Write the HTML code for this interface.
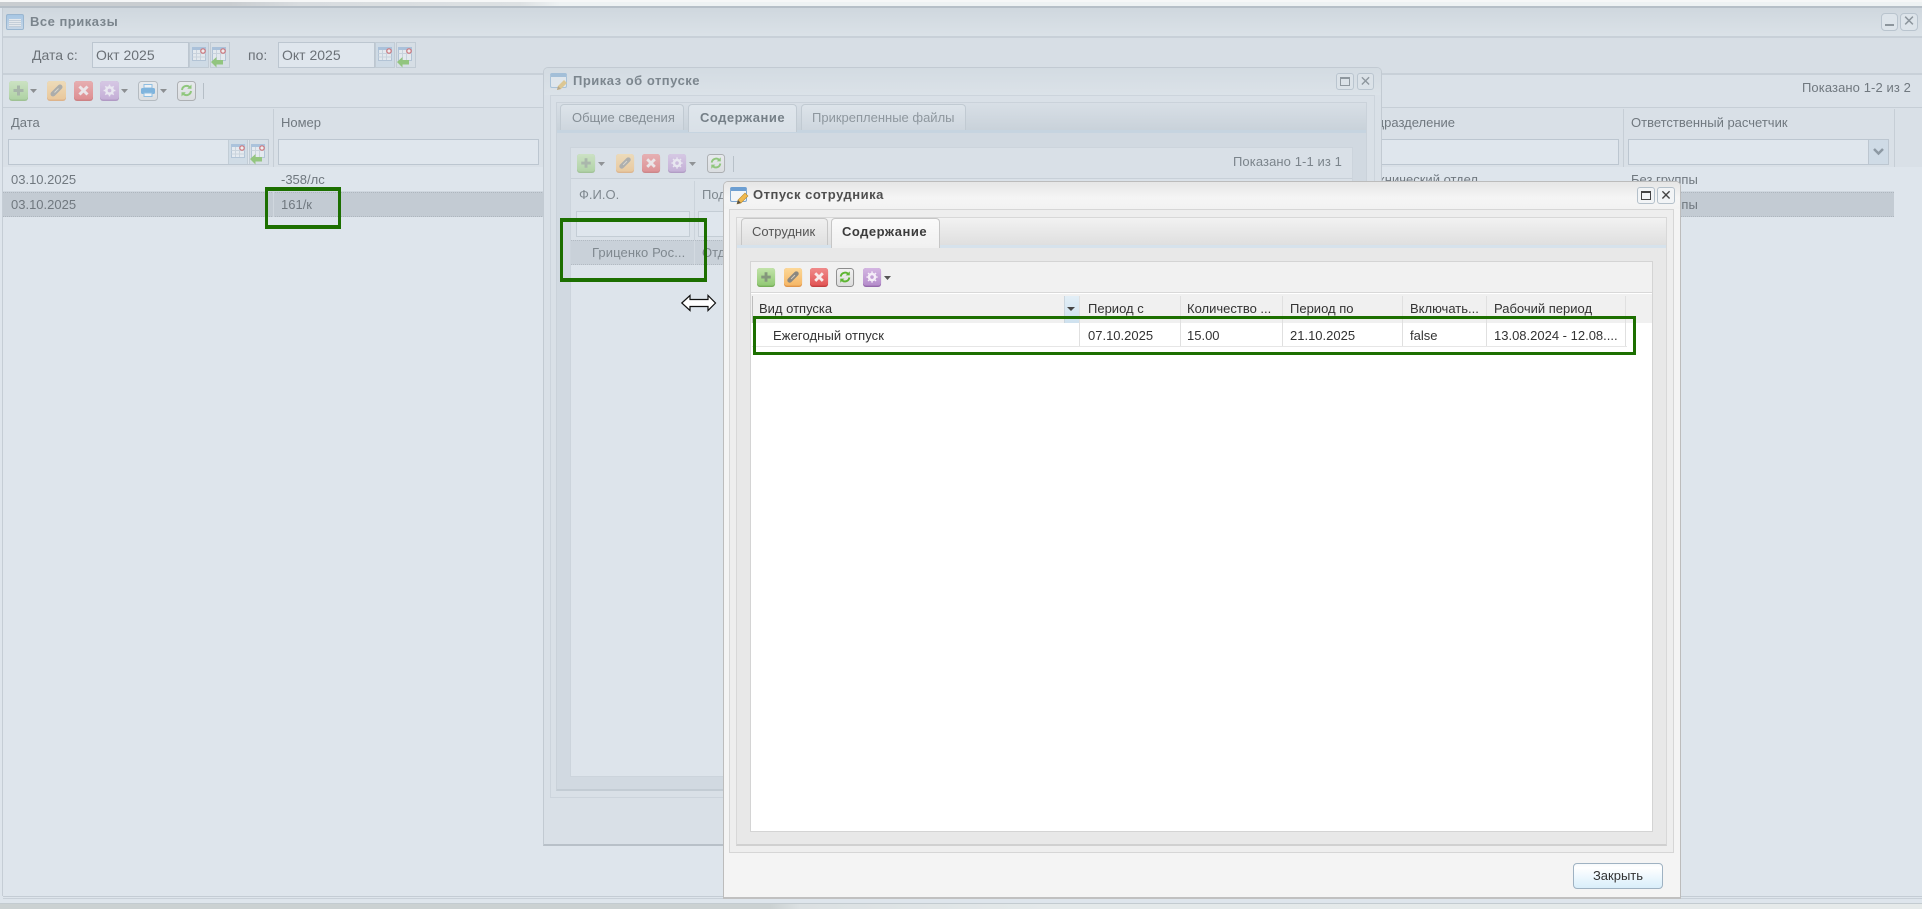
<!DOCTYPE html>
<html lang="ru"><head><meta charset="utf-8"><title>Все приказы</title>
<style>
html,body{margin:0;padding:0;width:1922px;height:909px;overflow:hidden;background:#dee5ec}
body{position:relative;font-family:"Liberation Sans","DejaVu Sans",sans-serif;font-size:13px}
.a{position:absolute;box-sizing:border-box}
.t{position:absolute;white-space:nowrap;line-height:16px;height:16px}
.m{color:#70787f}.s{color:#7f888f}.f{color:#333}
.b{font-weight:bold;letter-spacing:.5px}
svg{position:absolute;overflow:visible}
.d1{opacity:.58}.d2{opacity:.55}.d3{opacity:.8}
.g{position:absolute;box-sizing:border-box;border:3px solid #1c6f00;z-index:50}
</style></head><body>
<svg width="0" height="0" style="position:absolute"><defs>
<linearGradient id="gG" x1="0" y1="0" x2="0" y2="1"><stop offset="0" stop-color="#c2e3a9"/><stop offset="1" stop-color="#91c974"/></linearGradient>
<linearGradient id="gO" x1="0" y1="0" x2="0" y2="1"><stop offset="0" stop-color="#fcd898"/><stop offset="1" stop-color="#f6b766"/></linearGradient>
<linearGradient id="gR" x1="0" y1="0" x2="0" y2="1"><stop offset="0" stop-color="#f08a8a"/><stop offset="1" stop-color="#e25555"/></linearGradient>
<linearGradient id="gP" x1="0" y1="0" x2="0" y2="1"><stop offset="0" stop-color="#d4b6e2"/><stop offset="1" stop-color="#b58ccb"/></linearGradient>
<linearGradient id="gW" x1="0" y1="0" x2="0" y2="1"><stop offset="0" stop-color="#f2f2f2"/><stop offset="1" stop-color="#dcdcdc"/></linearGradient>
<symbol id="iPlus" viewBox="0 0 20 20"><rect width="19" height="20" rx="3" fill="#76ad58"/><rect width="19" height="18.5" rx="3" fill="url(#gG)"/><path d="M9.5 4.500v10M4.500 9.500h10" stroke="#84967c" stroke-width="3"/></symbol>
<symbol id="iEdit" viewBox="0 0 20 20"><rect width="19" height="20" rx="3" fill="#e0954a"/><rect width="19" height="18.5" rx="3" fill="url(#gO)"/><path d="M6 13L13 6" stroke="#8b8880" stroke-width="5" stroke-linecap="round"/><path d="M7.500 11.500l4-4" stroke="#d8d0c0" stroke-width="1"/></symbol>
<symbol id="iDel" viewBox="0 0 20 20"><rect width="19" height="20" rx="3" fill="#c23f3f"/><rect width="19" height="18.5" rx="3" fill="url(#gR)"/><path d="M5.5 5.500l8 8M13.5 5.500l-8 8" stroke="#f8eaea" stroke-width="3"/></symbol>
<symbol id="iCfg" viewBox="0 0 20 20"><rect width="19" height="20" rx="3" fill="#9468ab"/><rect width="19" height="18.5" rx="3" fill="url(#gP)"/><circle cx="9.5" cy="9.5" r="3.2" fill="none" stroke="#f5eef8" stroke-width="2.6"/><path d="M9.5 3.600v2M9.5 13.400v2M3.600 9.5h2M13.400 9.500h2M5.300 5.300l1.400 1.400M12.300 12.300l1.400 1.400M13.700 5.300l-1.400 1.400M6.700 12.300l-1.400 1.400" stroke="#f5eef8" stroke-width="1.5"/></symbol>
<symbol id="iRef" viewBox="0 0 20 20"><rect x=".5" y=".5" width="18" height="19" rx="3" fill="url(#gW)" stroke="#8d8d8d"/><path d="M5 9a4.600 4.600 0 0 1 8-2.600" fill="none" stroke="#5cb531" stroke-width="2"/><path d="M14.500 3.500v4.300h-4.300z" fill="#5cb531"/><path d="M14 10a4.600 4.600 0 0 1-8 2.600" fill="none" stroke="#5cb531" stroke-width="2"/><path d="M4.500 15.500v-4.300h4.300z" fill="#5cb531"/></symbol>
<symbol id="iPrn" viewBox="0 0 20 20"><rect x=".5" y=".5" width="19" height="19" rx="3" fill="url(#gW)" stroke="#9aa0a6"/><rect x="6" y="3.500" width="8" height="3.500" fill="#fff" stroke="#5aa6dc" stroke-width="1"/><rect x="3" y="7" width="14" height="6" rx="1.500" fill="#3f95d6"/><rect x="6" y="12" width="8" height="3.500" fill="#fff" stroke="#5aa6dc" stroke-width="1"/></symbol>
<symbol id="iCar" viewBox="0 0 8 5"><path d="M0 0h7L3.500 4z" fill="#555"/></symbol>
<symbol id="iCal" viewBox="0 0 20 26"><rect x=".5" y=".5" width="19" height="25" fill="#cddae5" stroke="#bcc7d1"/><rect x="3.500" y="5.500" width="13" height="13" fill="#e6ecf1" stroke="#a9bdd2"/><rect x="3" y="5" width="14" height="3" fill="#9fbbd8"/><path d="M3.500 11.500h13M3.500 15h13M7.500 8v10M11.500 8v10" stroke="#c5d0da" stroke-width="1"/><circle cx="14" cy="9" r="2.200" fill="#f2f2f2" stroke="#cc5a60" stroke-width="1.200"/></symbol>
<symbol id="iCal2" viewBox="0 0 20 26"><rect x=".5" y=".5" width="19" height="25" fill="#d6dee5" stroke="#bcc7d1"/><rect x="2.500" y="5.500" width="13" height="13" fill="#e6ecf1" stroke="#a9bdd2"/><rect x="2" y="5" width="14" height="3" fill="#9fbbd8"/><path d="M2.500 11.500h13M6.500 8v10M10.500 8v10" stroke="#c5d0da" stroke-width="1"/><circle cx="13" cy="9" r="2.200" fill="#f2f2f2" stroke="#cc5a60" stroke-width="1.200"/><path d="M1 20l5.500-5v3h6.500v4.500H6.500v3z" fill="#82bf66"/></symbol>
</defs></svg>

<!-- top strip -->
<div class="a" style="left:0;top:0;width:1922px;height:2px;background:#f6f7f7"></div>
<div class="a" style="left:0;top:2px;width:1922px;height:5px;background:linear-gradient(90deg,#c9cdd0 0,#c9cdd0 230px,#d8dcdf 300px,#dde1e3 520px,#eef2f3 560px,#eef2f3 100%)"></div>
<div class="a" style="left:0;top:6px;width:1922px;height:2px;background:#b6bfc7"></div>

<!-- MAIN WINDOW -->
<div class="a" style="left:2px;top:8px;width:1920px;height:888px;background:#dee5ec;border-left:1px solid #c5cdd5"></div>
<div class="a" style="left:3px;top:8px;width:1919px;height:29px;background:linear-gradient(#cfd7de,#dbe2e8)"></div>
<div class="a" style="left:6px;top:14px;width:18px;height:16px;background:linear-gradient(#a7c6e4,#c6d6e6);border:1px solid #9ab6d0;border-radius:2px"></div>
<div class="a" style="left:9px;top:19px;width:12px;height:8px;background:repeating-linear-gradient(#e4e8ec 0,#e4e8ec 1px,#c4ced8 1px,#c4ced8 2px)"></div>
<div class="t b" style="left:30px;top:14px;color:#7b858d">Все приказы</div>
<div class="a" style="left:1881px;top:13px;width:17px;height:18px;border:1px solid #b9c4ce;border-radius:4px;background:#dde4ea"></div>
<div class="a" style="left:1885px;top:24px;width:9px;height:2px;background:#8c959c"></div>
<div class="a" style="left:1900px;top:13px;width:18px;height:18px;border:1px solid #b9c4ce;border-radius:4px;background:#dde4ea;color:#8c959c;font-size:15px;line-height:16px;text-align:center">✕</div>

<div class="a" style="left:3px;top:36px;width:1919px;height:2px;background:#c8d0d8"></div>
<div class="a" style="left:3px;top:38px;width:1919px;height:36px;background:#d7dee5"></div>
<div class="t" style="left:32px;top:47px;font-size:14px;color:#6b7177">Дата с:</div>
<div class="a" style="left:92px;top:42px;width:97px;height:26px;border:1px solid #bcc6d0;background:#dfe6ed"></div>
<div class="t" style="left:96px;top:47px;font-size:14px;color:#6b7177">Окт 2025</div>
<svg class="d3" style="left:189px;top:42px" width="20" height="26"><use href="#iCal"/></svg>
<svg class="d3" style="left:210px;top:42px" width="20" height="26"><use href="#iCal2"/></svg>
<div class="t" style="left:248px;top:47px;font-size:14px;color:#6b7177">по:</div>
<div class="a" style="left:278px;top:42px;width:97px;height:26px;border:1px solid #bcc6d0;background:#dfe6ed"></div>
<div class="t" style="left:282px;top:47px;font-size:14px;color:#6b7177">Окт 2025</div>
<svg class="d3" style="left:375px;top:42px" width="20" height="26"><use href="#iCal"/></svg>
<svg class="d3" style="left:396px;top:42px" width="20" height="26"><use href="#iCal2"/></svg>

<div class="a" style="left:3px;top:73px;width:1919px;height:2px;background:#c8d0d8"></div>
<div class="a" style="left:3px;top:75px;width:1919px;height:32px;background:#dae1e8"></div>
<svg class="d1" style="left:9px;top:81px" width="20" height="20"><use href="#iPlus"/></svg>
<svg class="d1" style="left:30px;top:89px" width="8" height="5"><use href="#iCar"/></svg>
<svg class="d1" style="left:47px;top:81px" width="20" height="20"><use href="#iEdit"/></svg>
<svg class="d1" style="left:74px;top:81px" width="20" height="20"><use href="#iDel"/></svg>
<svg class="d1" style="left:100px;top:81px" width="20" height="20"><use href="#iCfg"/></svg>
<svg class="d1" style="left:121px;top:89px" width="8" height="5"><use href="#iCar"/></svg>
<svg class="d1" style="left:138px;top:81px" width="20" height="20"><use href="#iPrn"/></svg>
<svg class="d1" style="left:160px;top:89px" width="8" height="5"><use href="#iCar"/></svg>
<svg class="d1" style="left:177px;top:81px" width="20" height="20"><use href="#iRef"/></svg>
<div class="a" style="left:203px;top:83px;width:1px;height:16px;background:#b5bec6"></div>
<div class="t" style="right:11px;top:80px;color:#70787f;letter-spacing:.1px">Показано 1-2 из 2</div>

<div class="a" style="left:3px;top:107px;width:1919px;height:1px;background:#c6ced6"></div>
<div class="a" style="left:3px;top:108px;width:1919px;height:59px;background:#d9e0e7"></div>
<div class="a" style="left:273px;top:109px;width:1px;height:58px;background:#c6ced6"></div>
<div class="a" style="left:1623px;top:109px;width:1px;height:58px;background:#c6ced6"></div>
<div class="a" style="left:1894px;top:109px;width:1px;height:58px;background:#c6ced6"></div>
<div class="t m" style="left:11px;top:115px">Дата</div>
<div class="t m" style="left:281px;top:115px">Номер</div>
<div class="t m" style="right:467px;top:115px">Подразделение</div>
<div class="t m" style="left:1631px;top:115px">Ответственный расчетчик</div>
<div class="a" style="left:8px;top:139px;width:261px;height:26px;border:1px solid #bcc6d0;background:#dfe6ed"></div>
<svg class="d3" style="left:228px;top:139px" width="20" height="26"><use href="#iCal"/></svg>
<svg class="d3" style="left:249px;top:139px" width="20" height="26"><use href="#iCal2"/></svg>
<div class="a" style="left:278px;top:139px;width:261px;height:26px;border:1px solid #bcc6d0;background:#dfe6ed"></div>
<div class="a" style="left:1300px;top:139px;width:319px;height:26px;border:1px solid #bcc6d0;background:#dfe6ed"></div>
<div class="a" style="left:1628px;top:139px;width:261px;height:26px;border:1px solid #bcc6d0;background:#dfe6ed"></div>
<div class="a" style="left:1868px;top:139px;width:21px;height:26px;border:1px solid #bcc6d0;background:#cfdbe6"></div>
<svg style="left:1873px;top:148px" width="11" height="8"><path d="M1 1l4.500 4.500L10 1" fill="none" stroke="#8d99a3" stroke-width="2.500"/></svg>

<div class="t m" style="left:11px;top:172px">03.10.2025</div>
<div class="t m" style="left:281px;top:172px">-358/лс</div>
<div class="t m" style="right:444px;top:172px">Технический отдел</div>
<div class="t m" style="left:1631px;top:172px">Без группы</div>
<div class="a" style="left:3px;top:191px;width:1891px;height:1px;background:#cfd7df"></div>
<div class="a" style="left:3px;top:192px;width:1891px;height:25px;background:#c3cbd3;border-top:1px dotted #aeb6be;border-bottom:1px dotted #aeb6be"></div>
<div class="a" style="left:273px;top:192px;width:1px;height:25px;background:#d0d7de"></div>
<div class="t m" style="left:11px;top:197px">03.10.2025</div>
<div class="t m" style="left:281px;top:197px">161/к</div>
<div class="t m" style="left:1631px;top:197px">Без группы</div>

<div class="g" style="left:265px;top:187px;width:76px;height:42px;border-width:4px 3.500px"></div>

<div class="a" style="left:3px;top:896px;width:1919px;height:1px;background:#c4ccd4"></div>
<div class="a" style="left:3px;top:898px;width:1919px;height:1px;background:#c8d0d8"></div>
<div class="a" style="left:0;top:904px;width:1922px;height:5px;background:linear-gradient(90deg,#cbd1d2 0,#cbd1d2 770px,#dbe0e2 800px,#e4e9ea 1050px,#e6eaea 100%)"></div>
<div class="a" style="left:0;top:903px;width:1922px;height:1px;background:#c3cbd0"></div>

<!-- WINDOW 2 -->
<div class="a" style="left:543px;top:67px;width:839px;height:779px;background:#d9e0e7;border:1px solid #c2cad2;border-bottom:2px solid #b8c0c8;border-radius:5px 5px 0 0"></div>
<div class="a" style="left:544px;top:68px;width:837px;height:27px;background:linear-gradient(#d3dbe2,#dbe2e8);border-radius:4px 4px 0 0"></div>
<div class="a" style="left:550px;top:73px;width:17px;height:15px;background:#dfe6ec;border:1px solid #a9c2d8;border-top:4px solid #a3bfd8;border-radius:2px"></div>
<svg style="left:555px;top:78px" width="14" height="14"><path d="M2 12l1-4L9 2l3 3-6 6z" fill="#dcc794"/><path d="M2 12l1-4 3 3z" fill="#b9a98a"/></svg>
<div class="t b" style="left:573px;top:73px;color:#7c868e">Приказ об отпуске</div>
<div class="a" style="left:1336px;top:73px;width:18px;height:17px;border:1px solid #bac5cf;border-radius:3px;background:#dbe2e8"></div>
<div class="a" style="left:1340px;top:77px;width:10px;height:9px;border:1px solid #8e979e;border-top-width:2px"></div>
<div class="a" style="left:1357px;top:73px;width:17px;height:17px;border:1px solid #bac5cf;border-radius:3px;background:#dbe2e8;color:#8e979e;font-size:14px;line-height:15px;text-align:center">✕</div>
<div class="a" style="left:550px;top:95px;width:825px;height:703px;border:1px solid #ccd4dc;background:#d9e0e7"></div>
<div class="a" style="left:556px;top:102px;width:811px;height:689px;border:1px solid #cad2da;border-bottom:2px solid #c3ccd4;background:#d1d9e1"></div>
<div class="a" style="left:557px;top:103px;width:809px;height:27px;background:linear-gradient(#d8dfe6,#c9d2da)"></div>
<div class="a" style="left:557px;top:130px;width:809px;height:3px;background:#c6d4e0"></div>
<div class="a" style="left:560px;top:104px;width:124px;height:26px;border:1px solid #c1cad2;border-bottom:0;border-radius:4px 4px 0 0;background:linear-gradient(#dde4ea,#ced6de)"></div>
<div class="t" style="left:572px;top:110px;color:#858e95">Общие сведения</div>
<div class="a" style="left:688px;top:104px;width:109px;height:28px;border:1px solid #c1cad2;border-bottom:0;border-radius:4px 4px 0 0;background:linear-gradient(#dfe6ec,#d9e0e7)"></div>
<div class="t b" style="left:700px;top:110px;color:#757f87">Содержание</div>
<div class="a" style="left:801px;top:104px;width:165px;height:26px;border:1px solid #c1cad2;border-bottom:0;border-radius:4px 4px 0 0;background:linear-gradient(#dde4ea,#ced6de)"></div>
<div class="t" style="left:812px;top:110px;color:#8e979e">Прикрепленные файлы</div>
<div class="a" style="left:570px;top:147px;width:783px;height:630px;border:1px solid #ccd4dc;background:#dde4eb"></div>
<div class="a" style="left:571px;top:148px;width:781px;height:31px;background:#d9e0e7;border-bottom:1px solid #c8d0d8"></div>
<svg class="d2" style="left:577px;top:154px" width="19" height="19"><use href="#iPlus"/></svg>
<svg class="d2" style="left:598px;top:162px" width="8" height="5"><use href="#iCar"/></svg>
<svg class="d2" style="left:616px;top:154px" width="19" height="19"><use href="#iEdit"/></svg>
<svg class="d2" style="left:642px;top:154px" width="19" height="19"><use href="#iDel"/></svg>
<svg class="d2" style="left:668px;top:154px" width="19" height="19"><use href="#iCfg"/></svg>
<svg class="d2" style="left:689px;top:162px" width="8" height="5"><use href="#iCar"/></svg>
<svg class="d1" style="left:707px;top:154px" width="19" height="19"><use href="#iRef"/></svg>
<div class="a" style="left:733px;top:156px;width:1px;height:16px;background:#b8c1c9"></div>
<div class="t" style="right:580px;top:154px;color:#7b848b;letter-spacing:.1px">Показано 1-1 из 1</div>
<div class="a" style="left:571px;top:179px;width:781px;height:61px;background:#dae1e8"></div>
<div class="a" style="left:694px;top:181px;width:1px;height:84px;background:#cbd3db"></div>
<div class="t s" style="left:579px;top:187px">Ф.И.О.</div>
<div class="t s" style="left:702px;top:187px">Подразделение</div>
<div class="a" style="left:576px;top:211px;width:114px;height:26px;border:1px solid #c4cdd5;background:#dfe6ed"></div>
<div class="a" style="left:698px;top:211px;width:100px;height:26px;border:1px solid #c4cdd5;background:#dfe6ed"></div>
<div class="a" style="left:571px;top:240px;width:781px;height:25px;background:#c9d1d9;border-top:1px dotted #b2bac2;border-bottom:1px dotted #b2bac2"></div>
<div class="a" style="left:694px;top:240px;width:1px;height:25px;background:#d3dae1"></div>
<div class="t s" style="left:592px;top:245px;letter-spacing:.1px">Гриценко Рос...</div>
<div class="t s" style="left:702px;top:245px">Отдел</div>

<div class="g" style="left:560px;top:218px;width:147px;height:64px;border-width:4px 3px"></div>

<!-- cursor -->
<svg style="left:681px;top:294px;z-index:60" width="36" height="18"><path d="M.800 9L9 1.500V5.500H27V1.500L34.500 9L27 16.500V12.500H9V16.500Z" fill="#fff" stroke="#111" stroke-width="1.200"/></svg>

<!-- WINDOW 3 -->
<div class="a" style="left:723px;top:181px;width:958px;height:718px;background:#f4f4f4;border:1px solid #bcbcbc;border-bottom:2px solid #c0c0c0;border-radius:5px 5px 0 0;z-index:10"></div>
<div style="position:absolute;left:0;top:0;z-index:11">
<div class="a" style="left:724px;top:182px;width:956px;height:27px;background:linear-gradient(#e6e6e6,#f5f5f5 60%,#f2f2f2);border-radius:4px 4px 0 0"></div>
<div class="a" style="left:730px;top:187px;width:17px;height:15px;background:#f2f5f8;border:1px solid #7fa7d0;border-top:4px solid #6d9fd2;border-radius:2px"></div>
<svg style="left:735px;top:191px" width="14" height="15"><path d="M2 13l1-4L10 2l3 3-7 7z" fill="#f0b94e" stroke="#b88a2e" stroke-width=".6"/><path d="M2 13l1-4 3 3z" fill="#55504a"/></svg>
<div class="t b" style="left:753px;top:187px;color:#4f4f4f">Отпуск сотрудника</div>
<div class="a" style="left:1637px;top:187px;width:18px;height:17px;border:1px solid #b4c0ca;border-radius:3px;background:#f2f4f6"></div>
<div class="a" style="left:1641px;top:191px;width:10px;height:9px;border:1px solid #444;border-top-width:2px"></div>
<div class="a" style="left:1657px;top:187px;width:18px;height:17px;border:1px solid #b4c0ca;border-radius:3px;background:#f2f4f6;color:#444;font-size:14px;line-height:15px;text-align:center">✕</div>
<div class="a" style="left:729px;top:209px;width:945px;height:644px;border:1px solid #d6d6d6;background:#eeeeee"></div>
<div class="a" style="left:736px;top:217px;width:931px;height:629px;border:1px solid #d8d8d8;border-bottom:2px solid #d0d0d0;background:#e8e8e8"></div>
<div class="a" style="left:737px;top:218px;width:929px;height:27px;background:linear-gradient(#f2f2f2,#dfdfdf)"></div>
<div class="a" style="left:737px;top:245px;width:929px;height:3px;background:#d6e2ec"></div>
<div class="a" style="left:741px;top:218px;width:87px;height:27px;border:1px solid #c6c6c6;border-bottom:0;border-radius:4px 4px 0 0;background:linear-gradient(#f0f0f0,#e0e0e0)"></div>
<div class="t" style="left:752px;top:224px;color:#555">Сотрудник</div>
<div class="a" style="left:831px;top:218px;width:109px;height:30px;border:1px solid #c6c6c6;border-bottom:0;border-radius:4px 4px 0 0;background:linear-gradient(#fafafa,#f0f0f0)"></div>
<div class="t b" style="left:842px;top:224px;color:#3c3c3c">Содержание</div>
<div class="a" style="left:750px;top:261px;width:903px;height:571px;border:1px solid #d4d4d4;background:#fff"></div>
<div class="a" style="left:751px;top:262px;width:901px;height:31px;background:#f1f1f1;border-bottom:1px solid #d8d8d8"></div>
<svg style="left:757px;top:268px" width="19" height="19"><use href="#iPlus"/></svg>
<svg style="left:784px;top:268px" width="19" height="19"><use href="#iEdit"/></svg>
<svg style="left:810px;top:268px" width="19" height="19"><use href="#iDel"/></svg>
<svg style="left:836px;top:268px" width="19" height="19"><use href="#iRef"/></svg>
<svg style="left:863px;top:268px" width="19" height="19"><use href="#iCfg"/></svg>
<svg style="left:884px;top:276px" width="8" height="5"><use href="#iCar"/></svg>
<div class="a" style="left:751px;top:294px;width:901px;height:29px;background:#f0f0f0"></div>
<div class="a" style="left:752px;top:296px;width:1px;height:27px;background:#bdbdbd"></div>
<div class="a" style="left:1064px;top:296px;width:15px;height:27px;background:linear-gradient(#e2eef6,#cfe2ef);border-left:1px solid #cbd6de"></div>
<svg style="left:1067px;top:307px" width="9" height="5"><path d="M0 0h8L4 4z" fill="#444"/></svg>
<div class="a" style="left:1079px;top:296px;width:1px;height:51px;background:#e0e0e0"></div>
<div class="a" style="left:1180px;top:296px;width:1px;height:51px;background:#e0e0e0"></div>
<div class="a" style="left:1282px;top:296px;width:1px;height:51px;background:#e0e0e0"></div>
<div class="a" style="left:1402px;top:296px;width:1px;height:51px;background:#e0e0e0"></div>
<div class="a" style="left:1486px;top:296px;width:1px;height:51px;background:#e0e0e0"></div>
<div class="a" style="left:1625px;top:296px;width:1px;height:51px;background:#e0e0e0"></div>
<div class="a" style="left:752px;top:346px;width:875px;height:1px;background:#e6e6e6"></div>
<div class="t f" style="left:759px;top:301px">Вид отпуска</div>
<div class="t f" style="left:1088px;top:301px">Период с</div>
<div class="t f" style="left:1187px;top:301px">Количество ...</div>
<div class="t f" style="left:1290px;top:301px">Период по</div>
<div class="t f" style="left:1410px;top:301px">Включать...</div>
<div class="t f" style="left:1494px;top:301px">Рабочий период</div>
<div class="t f" style="left:773px;top:328px;letter-spacing:.1px">Ежегодный отпуск</div>
<div class="t f" style="left:1088px;top:328px">07.10.2025</div>
<div class="t f" style="left:1187px;top:328px">15.00</div>
<div class="t f" style="left:1290px;top:328px">21.10.2025</div>
<div class="t f" style="left:1410px;top:328px">false</div>
<div class="t f" style="left:1494px;top:328px">13.08.2024 - 12.08....</div>
<div class="g" style="left:753px;top:316px;width:883px;height:39px;border-width:3px"></div>
<div class="a" style="left:1573px;top:863px;width:90px;height:26px;border:1px solid #9fb2c2;border-radius:4px;background:linear-gradient(#f6f9fb,#fff 15%,#eaf6fd 60%,#d9eefa)"></div>
<div class="t" style="left:1573px;top:868px;width:90px;text-align:center;color:#333">Закрыть</div>
</div>
</body></html>
